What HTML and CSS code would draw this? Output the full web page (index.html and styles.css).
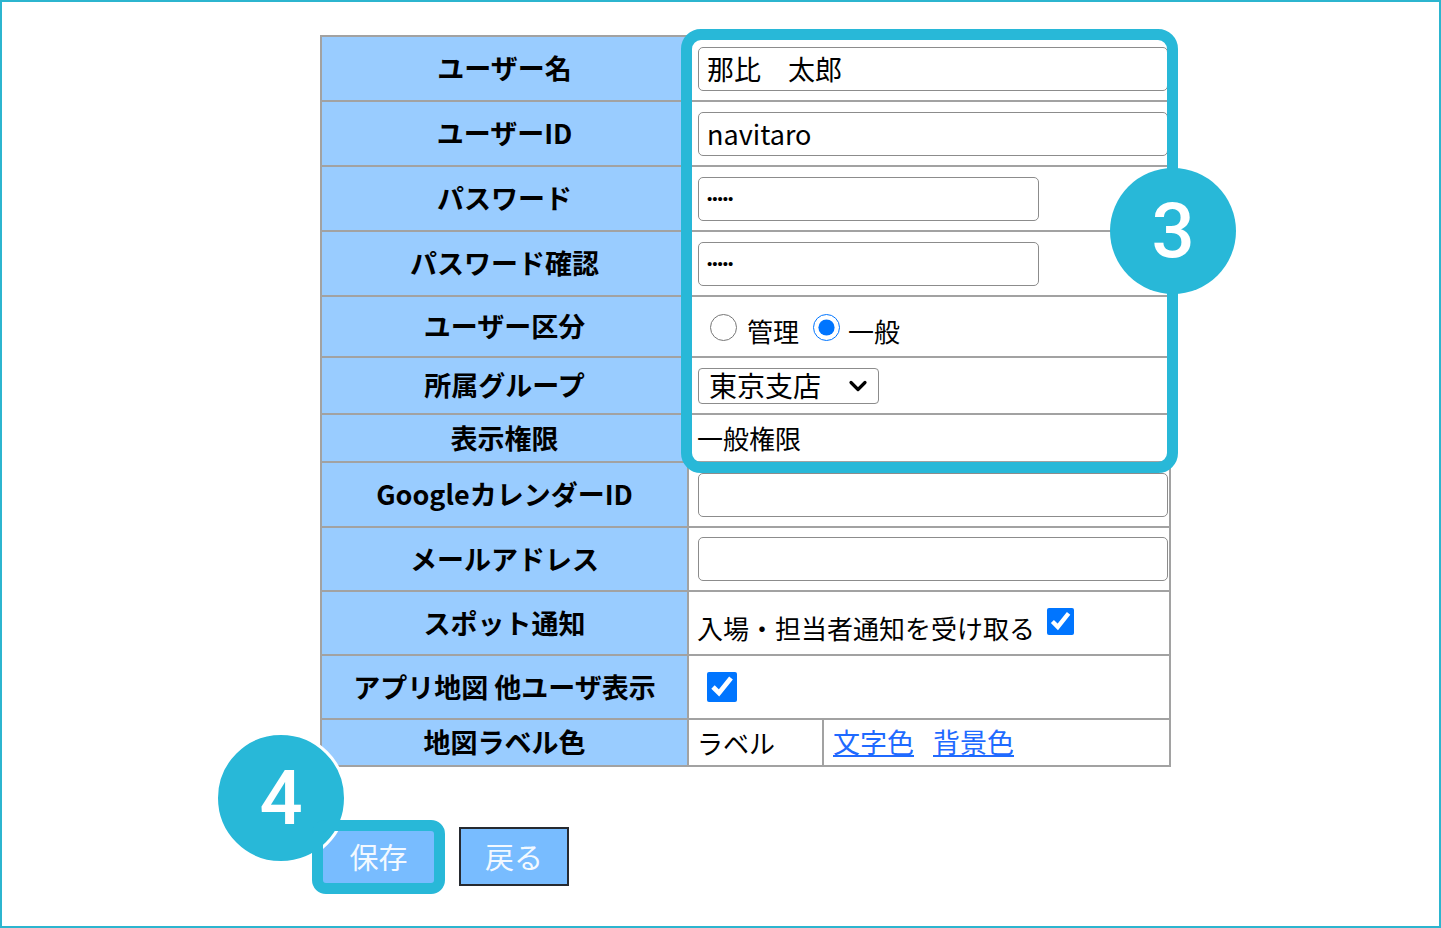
FILE: index.html
```html
<!DOCTYPE html>
<html lang="ja">
<head>
<meta charset="utf-8">
<title>ユーザー編集</title>
<link rel="stylesheet" href="styles.css">
</head>
<body>
<div class="frame">
  <table class="form">
    <colgroup><col class="c-label"><col class="c-sub"><col class="c-rest"></colgroup>
    <tr class="h65"><th>ユーザー名</th><td colspan="2"><input class="txt" type="text" value="那比　太郎"></td></tr>
    <tr class="h65"><th>ユーザーID</th><td colspan="2"><input class="txt" type="text" value="navitaro"></td></tr>
    <tr class="h65"><th>パスワード</th><td colspan="2"><input class="pw" type="password" value="aaaaa"></td></tr>
    <tr class="h65"><th>パスワード確認</th><td colspan="2"><input class="pw" type="password" value="aaaaa"></td></tr>
    <tr class="h61"><th>ユーザー区分</th><td colspan="2"><div class="radios"><label class="opt"><input type="radio" name="kbn">管理</label><label class="opt"><input type="radio" name="kbn" checked>一般</label></div></td></tr>
    <tr class="h57"><th>所属グループ</th><td colspan="2"><span class="sel-wrap"><select class="sel"><option>東京支店</option></select><svg class="chev" width="20" height="14" viewBox="0 0 20 14" aria-hidden="true"><path d="M3 3.5 L10 10.5 L17 3.5" fill="none" stroke="#000" stroke-width="3.2" stroke-linecap="round" stroke-linejoin="round"/></svg></span></td></tr>
    <tr class="h48"><th>表示権限</th><td colspan="2">一般権限</td></tr>
    <tr class="h65"><th>GoogleカレンダーID</th><td colspan="2"><input class="txt" type="text" value=""></td></tr>
    <tr class="h64"><th>メールアドレス</th><td colspan="2"><input class="txt" type="text" value=""></td></tr>
    <tr class="h64"><th>スポット通知</th><td colspan="2"><label class="spot">入場・担当者通知を受け取る<input class="chk chk-s" type="checkbox" checked></label></td></tr>
    <tr class="h64"><th>アプリ地図 他ユーザ表示</th><td colspan="2"><input class="chk chk-l" type="checkbox" checked></td></tr>
    <tr class="h47"><th>地図ラベル色</th><td>ラベル</td><td class="links"><a href="#">文字色</a><a href="#">背景色</a></td></tr>
  </table>
  <div class="buttons">
    <button class="btn btn-save" type="button">保存</button>
    <button class="btn btn-back" type="button">戻る</button>
  </div>
  <div class="mark box3"></div>
  <div class="badge b3">3</div>
  <div class="badge b4">4</div>
  <div class="mark box4"></div>
</div>
</body>
</html>
```

FILE: styles.css
```css
html, body {
  margin: 0;
  padding: 0;
  background: #fff;
}
body {
  font-family: "Noto Sans CJK JP", "Noto Sans", sans-serif;
  color: #000;
}
.frame {
  position: relative;
  width: 1441px;
  height: 928px;
  box-sizing: border-box;
  border: 2px solid #2cb5cf;
  padding: 33px 0 0 318px;
}
.form {
  border-collapse: collapse;
  table-layout: fixed;
  width: 849px;
}
.c-label { width: 367px; }
.c-sub { width: 135px; }
.c-rest { width: 347px; }
.form th, .form td {
  border: 2px solid #a2a2a2;
  line-height: 1.2;
  padding: 0;
}
.form th {
  background: #99ccff;
  font-size: 27px;
  font-weight: 700;
  text-align: center;
  white-space: nowrap;
}
.form td {
  font-size: 26px;
  padding-left: 8px;
  white-space: nowrap;
}
.h65 { height: 65px; }
.h64 { height: 64px; }
.h61 { height: 61px; }
.h57 { height: 57px; }
.h48 { height: 48px; }
.h47 { height: 47px; }

.txt, .pw {
  display: block;
  box-sizing: border-box;
  height: 44px;
  margin: 0 0 0 1px;
  border: 1.5px solid #8c8c8c;
  border-radius: 5px;
  padding: 0 8px;
  font-family: "Noto Sans CJK JP", "Noto Sans", sans-serif;
  color: #000;
  background: #fff;
}
.txt {
  width: 470px;
  font-size: 27px;
}
.pw {
  width: 341px;
  font-size: 15px;
  font-family: "Liberation Sans", sans-serif;
}
.radios {
  display: flex;
  align-items: center;
  padding-top: 8px;
}
.opt {
  display: inline-flex;
  align-items: center;
}
.opt input {
  width: 27px;
  height: 27px;
  margin: 0 10px 0 13px;
  position: relative;
  top: -3px;
}
.opt + .opt input {
  margin-left: 14px;
  margin-right: 8px;
}
.sel-wrap {
  position: relative;
  display: inline-block;
  vertical-align: middle;
  margin-left: 1px;
}
.sel {
  display: block;
  appearance: none;
  -webkit-appearance: none;
  box-sizing: border-box;
  width: 181px;
  height: 36px;
  font-size: 28px;
  line-height: 32px;
  font-family: "Noto Sans CJK JP", "Noto Sans", sans-serif;
  color: #000;
  border: 1.5px solid #8c8c8c;
  border-radius: 4px;
  background: #fff;
  padding: 0 0 2px 10px;
}
.chev {
  position: absolute;
  left: 150px;
  top: 11px;
  pointer-events: none;
}
.spot {
  display: inline-flex;
  align-items: center;
  padding-top: 10px;
}
.chk {
  margin: 0;
}
.chk-s {
  width: 27px;
  height: 27px;
  margin-left: 12px;
  position: relative;
  top: -7px;
}
.chk-l {
  width: 30px;
  height: 30px;
  margin-left: 10px;
  display: block;
}
.form td.links {
  padding-left: 9px;
  font-size: 27px;
}
.links a {
  color: #1f6aff;
  text-decoration: underline;
  margin-right: 19px;
}
.buttons {
  display: flex;
  gap: 25px;
  margin-top: 60px;
  padding-left: 3px;
}
.btn {
  width: 110px;
  height: 59px;
  box-sizing: border-box;
  border: 2px solid #262a30;
  background: #78bcff;
  color: #f3f9ff;
  font-size: 29px;
  font-family: "Noto Sans CJK JP", "Noto Sans", sans-serif;
  padding: 0;
  line-height: 1;
}
.btn-save {
  width: 111px;
  border-color: #78bcff;
}

/* annotation overlays */
.mark {
  position: absolute;
  box-sizing: border-box;
  border: 11px solid #28b8d8;
}
.box3 {
  left: 679px;
  top: 27px;
  width: 497px;
  height: 444px;
  border-radius: 20px;
  z-index: 2;
}
.box4 {
  left: 310px;
  top: 818px;
  width: 133px;
  height: 74px;
  border-radius: 14px;
  z-index: 4;
}
.badge {
  position: absolute;
  box-sizing: border-box;
  border-radius: 50%;
  background: #28b8d8;
  color: #fff;
  font-family: Roboto, "Liberation Sans", sans-serif;
  font-weight: 500;
  font-size: 76px;
  display: flex;
  align-items: center;
  justify-content: center;
  line-height: 1;
}
.b3 {
  left: 1108px;
  top: 166px;
  width: 126px;
  height: 126px;
  z-index: 3;
}
.b4 {
  left: 213px;
  top: 730px;
  width: 132px;
  height: 132px;
  border: 3px solid #fff;
  z-index: 3;
}
```
